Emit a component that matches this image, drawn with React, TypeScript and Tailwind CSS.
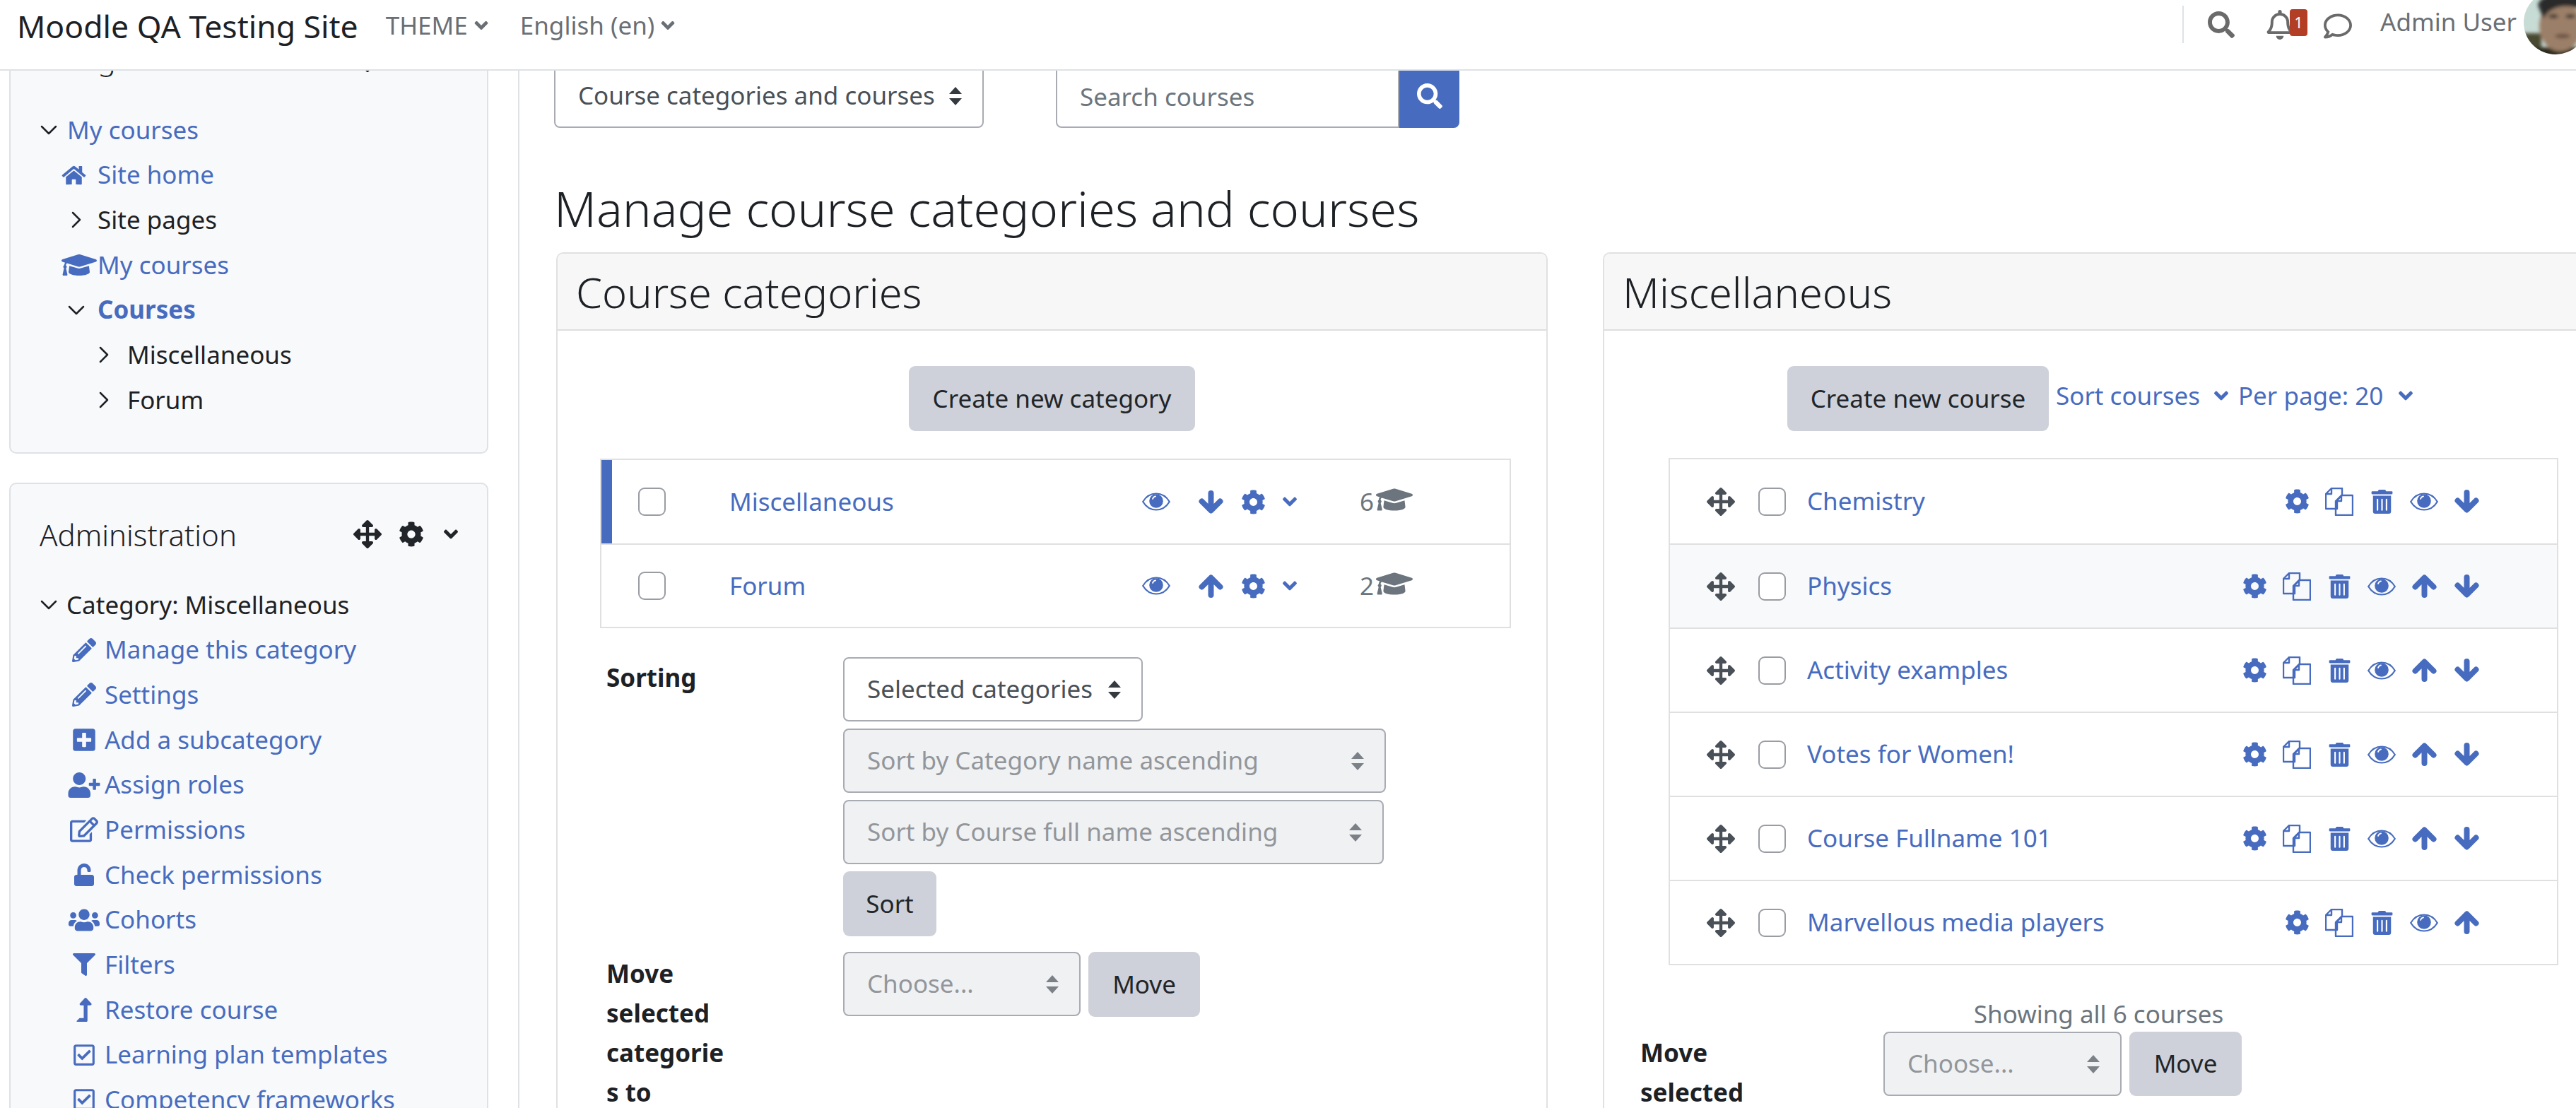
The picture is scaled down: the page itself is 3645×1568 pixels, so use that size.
import { ChevronDown, ChevronRight } from "lucide-react"
import {
  FaAngleDown, FaArrowsAlt, FaCog, FaFilter, FaGraduationCap, FaHome, FaLevelUpAlt,
  FaPencilAlt, FaPlusSquare, FaRegBell, FaRegCheckSquare, FaRegComment, FaRegEdit, FaSearch,
  FaTrashAlt, FaUnlock, FaUserPlus, FaUsers,
} from "react-icons/fa"
import type { ReactNode } from "react"

const BLUE = "text-[#476cbf]"

function SortArrows({ dim }: { dim?: boolean }) {
  return (
    <svg viewBox="0 0 20 26" className={`w-[20px] h-[26px] ${dim ? "text-[#7c8187]" : "text-[#343a40]"}`} fill="currentColor">
      <path d="M10 0 19 10H1zM10 26 1 16h18z" />
    </svg>
  )
}

function CopyIcon() {
  return (
    <svg viewBox="0 0 40 40" className="w-[40px] h-[40px]" fill="none" stroke="currentColor" strokeWidth="2.4" strokeLinejoin="round">
      <path d="M9 1h15v10l-7 7v12H1V9zM9 1v8H1" />
      <path d="M23 11h16v28H15V19zM23 11v8h-8" />
    </svg>
  )
}

function EyeIcon() {
  return (
    <svg viewBox="0 0 40 26" className="w-[40px] h-[26px]">
      <path d="M1.2 13C6 5 13 1.5 20 1.5S34 5 38.8 13C34 21 27 24.5 20 24.5S6 21 1.2 13z" fill="none" stroke="currentColor" strokeWidth="2.2" />
      <circle cx="20" cy="12" r="9.8" fill="currentColor" />
      <path d="M15 9c.6-2 2-3.2 4-3.6" fill="none" stroke="#fff" strokeWidth="1.8" strokeLinecap="round" />
    </svg>
  )
}

function ArrowIcon({ up }: { up?: boolean }) {
  return (
    <svg viewBox="0 0 35 33" className={`w-[35px] h-[33px] ${up ? "rotate-180" : ""}`} fill="none" stroke="currentColor" strokeWidth="8" strokeLinecap="round" strokeLinejoin="round">
      <path d="M17.5 4v24M4.5 15.5 17.5 28.5 30.5 15.5" />
    </svg>
  )
}

function Avatar() {
  return (
    <svg viewBox="0 0 90 90" className="w-[90px] h-[90px] rounded-full shrink-0">
      <defs>
        <filter id="soft"><feGaussianBlur stdDeviation="2.5" /></filter>
      </defs>
      <rect width="90" height="90" fill="#c8dcd6" />
      <g filter="url(#soft)">
        <rect x="-5" y="60" width="30" height="40" fill="#4a4a30" />
        <rect x="0" y="80" width="95" height="20" fill="#2e2c1c" />
        <ellipse cx="52" cy="50" rx="30" ry="36" fill="#9b7f68" />
        <path d="M20 20C25 0 80-5 95 10v35L78 25C60 18 35 22 28 40z" fill="#2b2a2a" />
        <ellipse cx="42" cy="36" rx="7" ry="3" fill="#3f3a36" />
        <ellipse cx="66" cy="36" rx="7" ry="3" fill="#3f3a36" />
        <ellipse cx="55" cy="64" rx="11" ry="3" fill="#6b4f42" />
      </g>
    </svg>
  )
}

function Select({ label, w, dim }: { label: string; w: string; dim?: boolean }) {
  return (
    <div className={`${w} h-[91px] pl-[32px] pr-[28px] flex items-center justify-between rounded-[8px] border-2 border-[#a9abb3] ${dim ? "bg-[#f0f1f3] text-[#92969b]" : "bg-white text-[#495057]"}`}>
      <span className="whitespace-nowrap">{label}</span>
      <SortArrows dim={dim} />
    </div>
  )
}

function Btn({ label, w, h = "h-[92px]" }: { label: string; w: string; h?: string }) {
  return (
    <button className={`${w} ${h} shrink-0 rounded-[9px] bg-[#ced1d9] text-[#212529] whitespace-nowrap`}>{label}</button>
  )
}

function Check() {
  return <input type="checkbox" className="appearance-none block w-[39px] h-[40px] rounded-[9px] border-2 border-[#9a9ca3] bg-white shrink-0" />
}

function BlockHeader({ title }: { title: string }) {
  return (
    <div className="h-[56px] flex items-center justify-between">
      <span className="font-light text-[42px] text-[#1d2125]">{title}</span>
      <div className="flex items-center text-[#212529]">
        <FaArrowsAlt className="w-[40px] h-[40px]" />
        <FaCog className="w-[36px] h-[36px] ml-[24px]" />
        <FaAngleDown className="w-[32px] h-[32px] ml-[22px]" />
      </div>
    </div>
  )
}

const NAV = [
  { label: "My courses", pad: "pl-[34px]", chevron: "down", gap: "mr-[6px]", tone: BLUE },
  { label: "Site home", pad: "pl-[71px]", icon: <FaHome className="w-[37px] h-[30px] mr-[15px]" />, tone: BLUE },
  { label: "Site pages", pad: "pl-[73px]", chevron: "right", gap: "mr-[10px]" },
  { label: "My courses", pad: "pl-[71px]", icon: <FaGraduationCap className="w-[52px] h-[40px]" />, tone: BLUE },
  { label: "Courses", pad: "pl-[73px]", chevron: "down", gap: "mr-[10px]", tone: BLUE, bold: true },
  { label: "Miscellaneous", pad: "pl-[112px]", chevron: "right", gap: "mr-[13px]" },
  { label: "Forum", pad: "pl-[112px]", chevron: "right", gap: "mr-[13px]" },
]

const ADMIN: { label: string; icon: ReactNode }[] = [
  { label: "Manage this category", icon: <FaPencilAlt className="w-[34px] h-[34px]" /> },
  { label: "Settings", icon: <FaPencilAlt className="w-[34px] h-[34px]" /> },
  { label: "Add a subcategory", icon: <FaPlusSquare className="w-[36px] h-[36px]" /> },
  { label: "Assign roles", icon: <FaUserPlus className="w-[46px] h-[36px]" /> },
  { label: "Permissions", icon: <FaRegEdit className="w-[40px] h-[36px]" /> },
  { label: "Check permissions", icon: <FaUnlock className="w-[28px] h-[34px]" /> },
  { label: "Cohorts", icon: <FaUsers className="w-[44px] h-[40px]" /> },
  { label: "Filters", icon: <FaFilter className="w-[32px] h-[34px]" /> },
  { label: "Restore course", icon: <FaLevelUpAlt className="w-[26px] h-[34px]" /> },
  { label: "Learning plan templates", icon: <FaRegCheckSquare className="w-[38px] h-[34px]" /> },
  { label: "Competency frameworks", icon: <FaRegCheckSquare className="w-[38px] h-[34px]" /> },
]

const COURSES = [
  { name: "Chemistry", up: false, down: true },
  { name: "Physics", up: true, down: true, shaded: true },
  { name: "Activity examples", up: true, down: true },
  { name: "Votes for Women!", up: true, down: true },
  { name: "Course Fullname 101", up: true, down: true },
  { name: "Marvellous media players", up: true, down: false },
]

function Sidebar() {
  return (
    <aside className="w-[735px] shrink-0 border-r-2 border-[#dee2e6] pl-[13px] pr-[42px]">
      {/* the page is scrolled: this block's header sits under the navbar */}
      <div className="h-[625px] -mt-[83px] rounded-[10px] border-2 border-[#dee2e6] bg-[#f8f9fa] pt-[35px]">
        <div className="pl-[41px] pr-[35px]">
          <BlockHeader title="Navigation" />
        </div>
        <ul className="mt-[42px]">
          {NAV.map((n, i) => (
            <li key={i} className={`h-[63.7px] flex items-center ${n.pad} ${n.tone ?? "text-[#1d2125]"} ${n.bold ? "font-bold" : ""}`}>
              {n.chevron === "down" && <ChevronDown className={`w-[40px] h-[40px] ${n.gap} text-[#1d2125]`} strokeWidth={1.5} />}
              {n.chevron === "right" && <ChevronRight className={`w-[40px] h-[40px] ${n.gap} text-[#1d2125]`} strokeWidth={1.5} />}
              {n.icon}
              <span>{n.label}</span>
            </li>
          ))}
        </ul>
      </div>

      <div className="mt-[41px] h-[1000px] rounded-[10px] border-2 border-[#dee2e6] bg-[#f8f9fa] pt-[43px] pl-[41px] pr-[35px]">
        <BlockHeader title="Administration" />
        <div className="mt-[40px] -ml-[7px] h-[63.7px] flex items-center text-[#1d2125]">
          <ChevronDown className="w-[40px] h-[40px] mr-[5px]" strokeWidth={1.5} />
          Category: Miscellaneous
        </div>
        {ADMIN.map(a => (
          <div key={a.label} className={`h-[63.7px] flex items-center ${BLUE}`}>
            <span className="w-[92px] pl-[34px] shrink-0 flex justify-center">{a.icon}</span>
            <span className="whitespace-nowrap">{a.label}</span>
          </div>
        ))}
      </div>
    </aside>
  )
}

function CategoriesCard() {
  return (
    <section className="w-[1403px] shrink-0 rounded-t-[10px] border-2 border-[#e1e1e1]">
      <h3 className="h-[109px] pl-[26px] flex items-center font-light text-[59.5px] text-[#1d2125] bg-[#f7f7f7] border-b-2 border-[#dedede] rounded-t-[8px]">Course categories</h3>
      <div className="flex justify-center mt-[50px]">
        <Btn label="Create new category" w="w-[405px]" />
      </div>

      <div className="mt-[39px] ml-[60px] w-[1289px] border-2 border-[#e0e0e0]">
        {[
          { name: "Miscellaneous", count: 6, active: true, arrow: <ArrowIcon /> },
          { name: "Forum", count: 2, active: false, arrow: <ArrowIcon up /> },
        ].map((c, i) => (
          <div key={c.name} className={`h-[118px] flex items-center ${i > 0 ? "border-t-2 border-[#e0e0e0]" : ""} ${c.active ? "border-l-[15px] border-l-[#476cbf] pl-[37px]" : "pl-[52px]"}`}>
            <Check />
            <span className={`ml-[90px] w-[556px] ${BLUE}`}>{c.name}</span>
            <span className={`w-[95px] flex justify-center ${BLUE}`}><EyeIcon /></span>
            <span className={`w-[60px] flex justify-center ${BLUE}`}>{c.arrow}</span>
            <span className={`w-[60px] flex justify-center ${BLUE}`}><FaCog className="w-[35px] h-[35px]" /></span>
            <span className={`w-[44px] flex justify-center ${BLUE}`}><FaAngleDown className="w-[32px] h-[32px]" /></span>
            <span className="ml-[77px] text-[#6c757d] flex items-center">
              {c.count}
              <FaGraduationCap className="w-[52px] h-[42px] ml-[3px] -mt-[6px]" />
            </span>
          </div>
        ))}
      </div>

      <div className="mt-[41px] ml-[69px] flex">
        <div className="w-[335px] pt-[3px] font-bold text-[#1d2125]">Sorting</div>
        <div className="flex flex-col gap-[10px] items-start">
          <Select label="Selected categories" w="w-[424px]" />
          <Select label="Sort by Category name ascending" w="w-[768px]" dim />
          <Select label="Sort by Course full name ascending" w="w-[765px]" dim />
          <Btn label="Sort" w="w-[132px]" />
        </div>
      </div>

      <div className="mt-[22px] ml-[69px] flex">
        <div className="w-[335px] leading-[56px] pt-[3px] font-bold text-[#1d2125] pr-[130px]">
          <div>Move</div>
          <div>selected</div>
          <div>categorie</div>
          <div>s to</div>
        </div>
        <div className="flex gap-[11px] items-start">
          <Select label="Choose..." w="w-[336px]" dim />
          <Btn label="Move" w="w-[158px]" />
        </div>
      </div>
    </section>
  )
}

function CoursesCard() {
  return (
    <section className="w-[1403px] shrink-0 rounded-t-[10px] border-2 border-[#e1e1e1]">
      <h3 className="h-[109px] pl-[26px] flex items-center font-light text-[59.5px] text-[#1d2125] bg-[#f7f7f7] border-b-2 border-[#dedede] rounded-t-[8px]">Miscellaneous</h3>
      <div className="flex items-start mt-[50px] ml-[259px]">
        <Btn label="Create new course" w="w-[370px]" />
        <div className={`ml-[10px] mt-[16px] flex items-center ${BLUE}`}>
          Sort courses
          <FaAngleDown className="w-[32px] h-[32px] ml-[14px]" />
          <span className="ml-[8px]">Per page: 20</span>
          <FaAngleDown className="w-[32px] h-[32px] ml-[16px]" />
        </div>
      </div>

      <div className="mt-[38px] ml-[91px] w-[1259px] border-2 border-[#e0e0e0]">
        {COURSES.map((c, i) => (
          <div key={c.name} className={`h-[119px] flex items-center ${i > 0 ? "border-t-2 border-[#e0e0e0]" : ""} ${c.shaded ? "bg-[#f8f9fa]" : ""}`}>
            <FaArrowsAlt className="w-[40px] h-[40px] ml-[52px] text-[#495057]" />
            <span className="ml-[33px]"><Check /></span>
            <span className={`ml-[30px] flex-1 ${BLUE}`}>{c.name}</span>
            <div className={`flex items-center mr-[98px] ${BLUE}`}>
              <span className="w-[60px] flex justify-center"><FaCog className="w-[35px] h-[35px]" /></span>
              <span className="w-[60px] flex justify-center"><CopyIcon /></span>
              <span className="w-[60px] flex justify-center"><FaTrashAlt className="w-[33px] h-[34px]" /></span>
              <span className="w-[60px] flex justify-center"><EyeIcon /></span>
              {c.up && <span className="w-[60px] flex justify-center"><ArrowIcon up /></span>}
              {c.down && <span className="w-[60px] flex justify-center"><ArrowIcon /></span>}
            </div>
          </div>
        ))}
      </div>

      <div className="mt-[47px] text-center text-[#6c757d] h-[44px] leading-[44px]">Showing all 6 courses</div>
      <div className="mt-[3px] ml-[51px] flex">
        <div className="w-[344px] leading-[56px] pt-[2px] font-bold text-[#1d2125]">
          <div>Move</div>
          <div>selected</div>
        </div>
        <div className="flex gap-[11px] items-start">
          <Select label="Choose..." w="w-[337px]" dim />
          <Btn label="Move" w="w-[159px]" h="h-[91px]" />
        </div>
      </div>
    </section>
  )
}

export default function App() {
  return (
    <div className="w-[3645px] h-[1568px] overflow-hidden bg-white flex flex-col font-['Noto_Sans',sans-serif] text-[35px] leading-[1.5] text-[#212529]">
      <header className="h-[100px] shrink-0 border-b-2 border-[#dee2e6] flex items-start pl-[24px] bg-white">
        <span className="text-[44.5px] mt-[4px] text-[#1d2125]">Moodle QA Testing Site</span>
        <span className="ml-[39px] mt-[10px] text-[#6a6f75] flex items-center">THEME<FaAngleDown className="w-[30px] h-[30px] ml-[4px]" /></span>
        <span className="ml-[40px] mt-[10px] text-[#6a6f75] flex items-center">English (en)<FaAngleDown className="w-[30px] h-[30px] ml-[4px]" /></span>
        <div className="ml-auto flex items-start text-[#6a6a6a]">
          <span className="w-[2px] h-[53px] mt-[8px] bg-[#dee2e6]" />
          <FaSearch className="w-[38px] h-[38px] mt-[16px] ml-[34px]" />
          <span className="relative ml-[45px] mt-[14px]">
            <FaRegBell className="w-[38px] h-[42px]" />
            <span className="absolute left-[33px] -top-[1px] w-[25px] h-[38px] rounded-[4px] bg-[#b23f25] text-white text-[21px] leading-[38px] text-center">1</span>
          </span>
          <FaRegComment className="w-[42px] h-[40px] mt-[17px] ml-[42px]" />
          <span className="ml-[39px] mt-[5px] text-[#6a6f75] whitespace-nowrap">Admin User</span>
          <span className="ml-[10px] -mt-[13px] -mr-[16px]"><Avatar /></span>
        </div>
      </header>

      <div className="flex-1 flex overflow-hidden">
        <Sidebar />
        <main className="flex-1 min-w-0 pl-[49px] overflow-hidden">
          <div className="flex -mt-[10px]">
            <Select label="Course categories and courses" w="w-[608px]" />
            <div className="ml-[102px] w-[486px] h-[91px] pl-[32px] pt-[3px] flex items-center rounded-l-[8px] border-2 border-[#a9abb3] text-[#6c757d]">Search courses</div>
            <button className="w-[85px] h-[91px] bg-[#476cbf] text-white rounded-r-[8px] flex items-center justify-center"><FaSearch className="w-[36px] h-[36px]" /></button>
          </div>
          <h2 className="mt-[68px] h-[91px] font-light text-[68.7px] leading-[91px] text-[#1d2125] whitespace-nowrap">Manage course categories and courses</h2>
          <div className="mt-[17px] flex gap-[78px] ml-[3px]">
            <CategoriesCard />
            <CoursesCard />
          </div>
        </main>
      </div>
    </div>
  )
}
